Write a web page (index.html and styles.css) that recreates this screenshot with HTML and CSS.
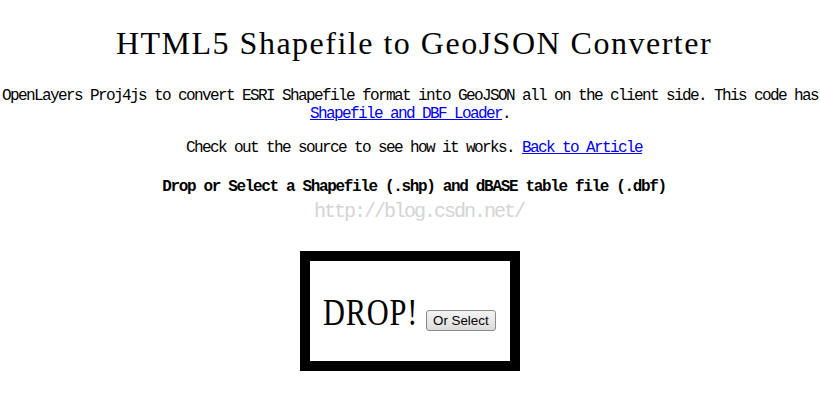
FILE: index.html
```html
<!DOCTYPE html>
<html lang="en">
<head>
    <meta charset="UTF-8">
    <title>HTML5 Shapefile to GeoJSON Converter</title>
    <link rel="stylesheet" href="styles.css">
</head>
<body>

<div class="side">
    <h1 class="tittel">HTML5 Shapefile to GeoJSON Converter</h1>
    <p class="intro">OpenLayers Proj4js to convert ESRI Shapefile format into GeoJSON all on the client side. This code has <a href="#">Shapefile and DBF Loader</a>.</p>
    <p class="kilde">Check out the source to see how it works. <a href="#">Back to Article</a></p>
    <h3 class="velg">Drop or Select a Shapefile (.shp) and dBASE table file (.dbf)</h3>
    <p class="vannmerke">http://blog.csdn.net/</p>
    <div class="dropzone" id="dropzone">
        <span class="drop">DROP!</span><button type="button" id="btnVelg">Or Select</button>
    </div>
</div>

</body>
</html>
```
FILE: styles.css
```css
html {
    background-color: white;
}
body {
    margin: 0;
    font-family: "Liberation Mono", monospace;
    color: black;
}
.side {
    text-align: center;
}
.tittel {
    margin: 23px 0 0;
    padding-left: 8px;
    font-family: "Liberation Serif", serif;
    font-size: 32px;
    line-height: 40px;
    font-weight: normal;
    letter-spacing: 1.5px;
}
.intro, .kilde {
    font-size: 16px;
    line-height: 18px;
    letter-spacing: -1.6px;
}
.intro {
    margin: 24px 0 0;
}
.kilde {
    margin: 16px 0 0;
    padding-left: 8px;
}
a {
    color: #0000ee;
}
.velg {
    margin: 21px 0 0;
    padding-left: 8px;
    font-size: 16px;
    line-height: 18px;
    letter-spacing: -1.35px;
}
.vannmerke {
    margin: 5px 0 0;
    padding-left: 18px;
    font-size: 20px;
    line-height: 22px;
    letter-spacing: -2px;
    color: #d4d4d4;
}
.dropzone {
    width: 187px;
    height: 69px;
    margin: 28px auto 0;
    border: 10px solid black;
    padding: 31px 0 0 13px;
    text-align: left;
    line-height: 40px;
}
.drop {
    display: inline-block;
    margin-right: -22px;
    font-family: "Liberation Serif", serif;
    font-size: 38px;
    letter-spacing: 1px;
    transform: scaleX(0.8);
    transform-origin: left;
}
button {
    margin-left: 6px;
    padding: 2px 6px;
    font-family: "Liberation Sans", Arial, sans-serif;
    font-size: 13.33px;
    line-height: 15px;
    letter-spacing: 0;
    color: black;
    border: 1px solid #8a8a8a;
    border-radius: 3px;
    background: linear-gradient(#f4f4f4, #dcdcdc);
    vertical-align: baseline;
}
```
